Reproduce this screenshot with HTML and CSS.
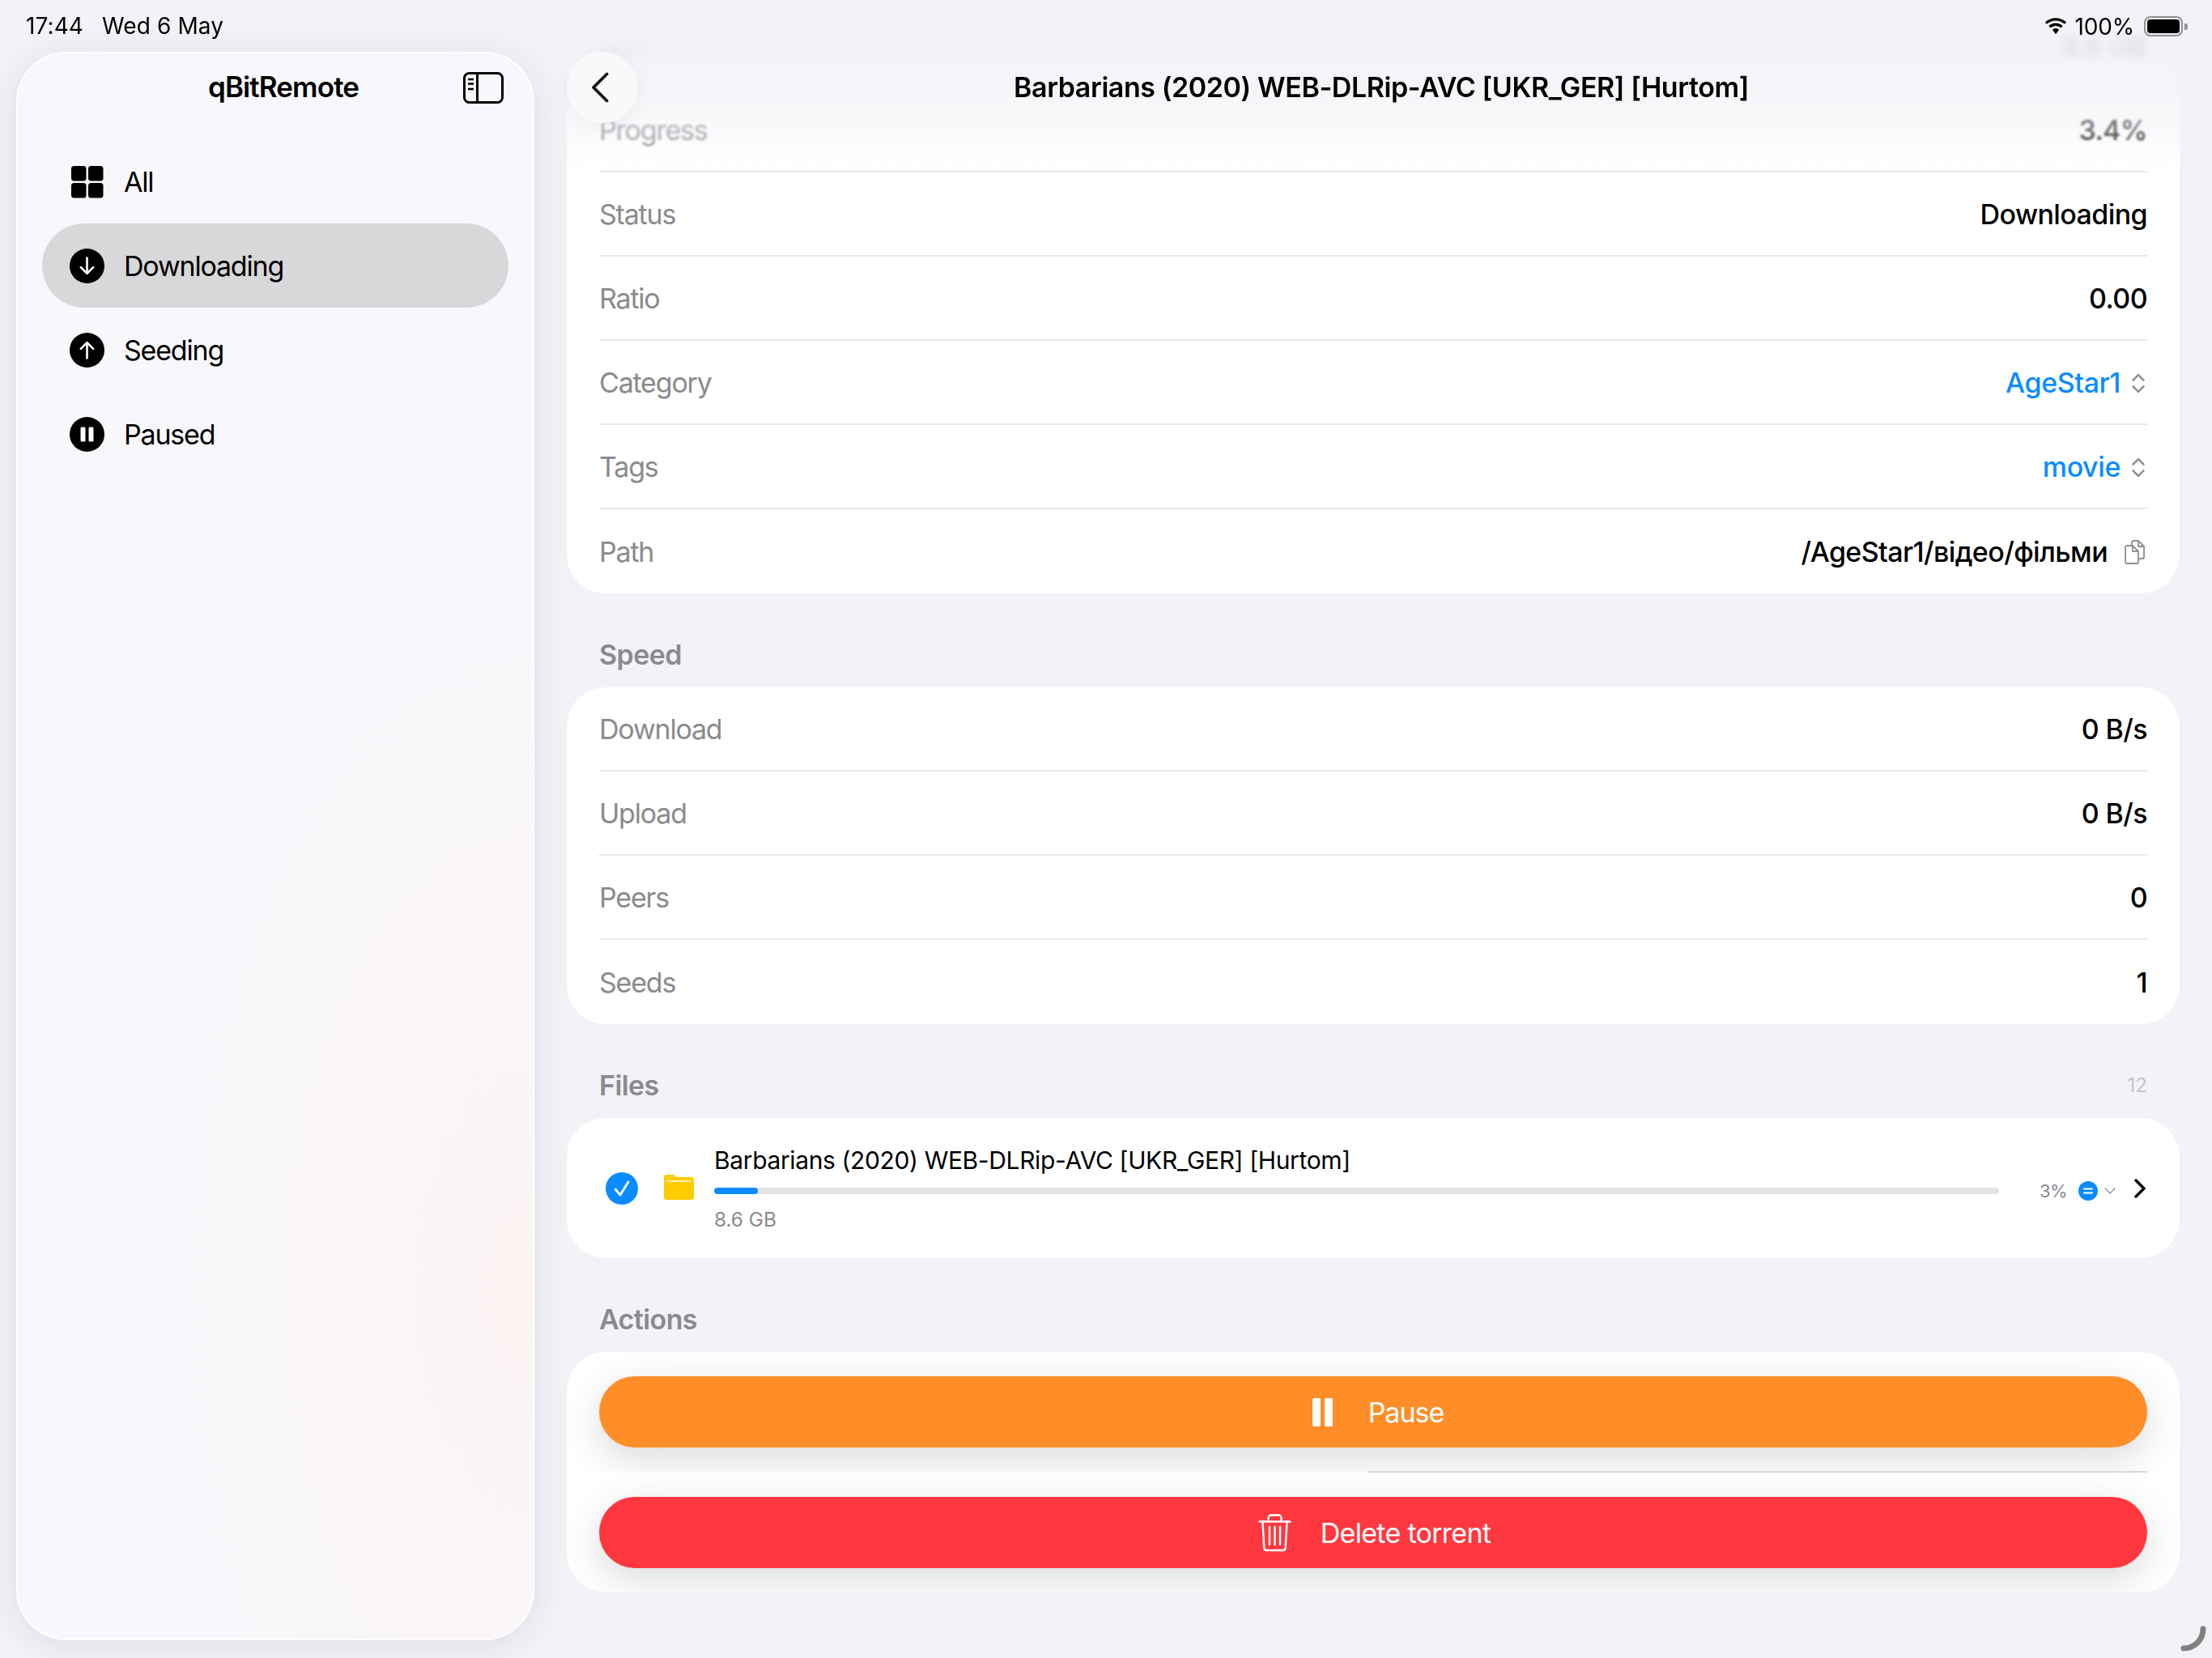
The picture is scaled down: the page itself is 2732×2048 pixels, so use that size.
FILE: index.html
```html
<!DOCTYPE html>
<html lang="en">
<head>
  <meta charset="UTF-8" />
  <title>qBitRemote</title>
  <link rel="stylesheet" href="styles.css">
</head>
<body>
  <!-- Status bar -->
  <div class="statusbar">
    <div class="status-left"><span>17:44</span><span>Wed 6 May</span></div>
    <div class="status-right">
      <svg class="wifi" viewBox="0 0 29 20"><path d="M14.5 3.2c4.1 0 7.8 1.6 10.600 4.200l2.100-2.300C23.900 2 19.400 0 14.500 0S5.100 2 1.800 5.100l2.100 2.300c2.800-2.600 6.500-4.200 10.600-4.200z"/><path d="M14.500 9.400c2.400 0 4.600.9 6.300 2.500l2.100-2.300c-2.200-2.100-5.200-3.400-8.400-3.400s-6.200 1.300-8.400 3.400l2.100 2.300c1.700-1.600 3.900-2.500 6.300-2.500z"/><path d="M14.500 12.500c-1.500 0-2.900.6-3.900 1.500l3.900 5.500 3.900-5.500c-1-.9-2.400-1.500-3.900-1.500z"/></svg>
      <span>100%</span>
      <div class="battery"><div class="battery-body"><div class="battery-level"></div></div><div class="battery-nub"></div></div>
    </div>
  </div>

  <div class="app">
    <!-- Sidebar -->
    <aside class="sidebar">
      <div class="side-head">
        <h1>qBitRemote</h1>
        <svg class="side-toggle" viewBox="0 0 50 39" fill="none" stroke="#000" stroke-width="3">
          <rect x="1.500" y="1.500" width="47" height="36" rx="6"/>
          <path d="M17.500 1.500v36"/>
          <path d="M6 9h7M6 14.500h7M6 21h7" stroke-width="2.500"/>
        </svg>
      </div>
      <nav class="menu">
        <div class="menu-item">
          <svg class="menu-icon" viewBox="0 0 43 43"><rect x="2" y="2" width="18.500" height="18.500" rx="3.500"/><rect x="23" y="2" width="18.500" height="18.500" rx="3.500"/><rect x="2" y="23" width="18.500" height="18.500" rx="3.500"/><rect x="23" y="23" width="18.500" height="18.500" rx="3.500"/></svg>
          <span>All</span>
        </div>
        <div class="menu-item active">
          <svg class="menu-icon" viewBox="0 0 43 43"><circle cx="21.500" cy="21.500" r="21.500"/><path d="M21.500 11.500v19M13.800 23.200l7.700 7.700 7.700-7.700" fill="none" stroke="#fff" stroke-width="2.600" stroke-linecap="round" stroke-linejoin="round"/></svg>
          <span>Downloading</span>
        </div>
        <div class="menu-item">
          <svg class="menu-icon" viewBox="0 0 43 43"><circle cx="21.500" cy="21.500" r="21.500"/><path d="M21.500 31.500v-19M13.800 19.800l7.700-7.700 7.700 7.700" fill="none" stroke="#fff" stroke-width="2.600" stroke-linecap="round" stroke-linejoin="round"/></svg>
          <span>Seeding</span>
        </div>
        <div class="menu-item">
          <svg class="menu-icon" viewBox="0 0 43 43"><circle cx="21.500" cy="21.500" r="21.500"/><rect x="13.500" y="12.500" width="6" height="18" rx="1.500" fill="#fff"/><rect x="23.500" y="12.500" width="6" height="18" rx="1.500" fill="#fff"/></svg>
          <span>Paused</span>
        </div>
      </nav>
    </aside>

    <!-- Detail -->
    <main class="detail">
      <section class="card">
        <div class="row"><span class="label">Size</span><span class="value">8.6 GB</span></div>
        <div class="row"><span class="label">Progress</span><span class="value">3.4%</span></div>
        <div class="row"><span class="label">Status</span><span class="value">Downloading</span></div>
        <div class="row"><span class="label">Ratio</span><span class="value">0.00</span></div>
        <div class="row"><span class="label">Category</span>
          <span class="value link">AgeStar1
            <svg class="updown" viewBox="0 0 16 23" fill="none" stroke="#8e8e93" stroke-width="2.400" stroke-linecap="round" stroke-linejoin="round"><path d="M2 8l6-6 6 6M2 15l6 6 6-6"/></svg>
          </span>
        </div>
        <div class="row"><span class="label">Tags</span>
          <span class="value link">movie
            <svg class="updown" viewBox="0 0 16 23" fill="none" stroke="#8e8e93" stroke-width="2.400" stroke-linecap="round" stroke-linejoin="round"><path d="M2 8l6-6 6 6M2 15l6 6 6-6"/></svg>
          </span>
        </div>
        <div class="row"><span class="label">Path</span>
          <span class="value path">/AgeStar1/відео/фільми
            <svg class="copy" viewBox="0 0 25 30" fill="none" stroke="#8e8e93" stroke-width="1.800" stroke-linejoin="round"><path d="M9 6V3a2 2 0 0 1 2-2h6l7 7v13a2 2 0 0 1-2 2h-4"/><path d="M17 1v7h7"/><path d="M3 7h7l7 7v13a2 2 0 0 1-2 2H3a2 2 0 0 1-2-2V9a2 2 0 0 1 2-2z"/><path d="M10 7v7h7"/></svg>
          </span>
        </div>
      </section>

      <div class="section-title"><span>Speed</span></div>
      <section class="card">
        <div class="row"><span class="label">Download</span><span class="value">0 B/s</span></div>
        <div class="row"><span class="label">Upload</span><span class="value">0 B/s</span></div>
        <div class="row"><span class="label">Peers</span><span class="value">0</span></div>
        <div class="row"><span class="label">Seeds</span><span class="value">1</span></div>
      </section>

      <div class="section-title"><span>Files</span><span class="count">12</span></div>
      <section class="card file-row">
        <svg class="check" viewBox="0 0 40 40"><circle cx="20" cy="20" r="20" fill="#0a8cff"/><path d="M12 21l6 7 10-16" fill="none" stroke="#fff" stroke-width="2.800" stroke-linecap="round" stroke-linejoin="round"/></svg>
        <svg class="folder" viewBox="0 0 37 31"><path d="M3 0h8c2 0 3 1 4 3h19a3 3 0 0 1 3 3v22a3 3 0 0 1-3 3H3a3 3 0 0 1-3-3V3a3 3 0 0 1 3-3z" fill="#ffcc00"/><rect x="3.500" y="7" width="30" height="2" fill="#fff1b0"/></svg>
        <div class="file-main">
          <div class="file-name">Barbarians (2020) WEB-DLRip-AVC [UKR_GER] [Hurtom]</div>
          <div class="bar"><div class="bar-fill"></div></div>
          <div class="file-size">8.6 GB</div>
        </div>
        <div class="file-meta">
          <span class="percent">3%</span>
          <svg class="prio" viewBox="0 0 24 24"><circle cx="12" cy="12" r="12" fill="#0a8cff"/><path d="M7 9.500h10M7 14.500h10" stroke="#fff" stroke-width="2.200" stroke-linecap="round"/></svg>
          <svg class="chev-down" viewBox="0 0 14 8" fill="none" stroke="#8e8e93" stroke-width="1.300" stroke-linecap="round" stroke-linejoin="round"><path d="M1 1l6 6 6-6"/></svg>
        </div>
        <svg class="chev-right" viewBox="0 0 14 24" fill="none" stroke="#000" stroke-width="3.400" stroke-linecap="round" stroke-linejoin="round"><path d="M2 2l10 10L2 22"/></svg>
      </section>

      <div class="section-title"><span>Actions</span></div>
      <section class="card actions">
        <div class="action-row divided">
          <button class="btn btn-pause">
            <svg class="btn-icon-pause" viewBox="0 0 25 35"><rect width="10" height="35" rx="2" fill="#fff"/><rect x="15" width="10" height="35" rx="2" fill="#fff"/></svg>
            <span>Pause</span>
          </button>
        </div>
        <div class="action-row">
          <button class="btn btn-delete">
            <svg class="btn-icon-trash" viewBox="0 0 41 47" fill="none" stroke="#fff" stroke-width="2.400" stroke-linecap="round" stroke-linejoin="round"><path d="M1.500 9.500h38"/><path d="M12.500 9.500V5a3.500 3.500 0 0 1 3.500-3.500h9A3.500 3.500 0 0 1 28.500 5v4.500"/><path d="M5.500 9.500l1.800 32.500a3 3 0 0 0 3 3h20.400a3 3 0 0 0 3-3l1.800-32.500"/><path d="M14 16v22M20.500 16v22M27 16v22"/></svg>
            <span>Delete torrent</span>
          </button>
        </div>
      </section>

      <!-- Nav bar over the scrolled content -->
      <div class="nav-fade"></div>
      <div class="nav">
        <button class="back"><svg viewBox="0 0 22 38" fill="none" stroke="#111" stroke-width="3.800" stroke-linecap="round" stroke-linejoin="round"><path d="M19.500 2.500L3 19l16.500 16.500"/></svg></button>
        <div class="nav-title">Barbarians (2020) WEB-DLRip-AVC [UKR_GER] [Hurtom]</div>
      </div>
    </main>
  </div>

  <svg class="spinner" viewBox="0 0 32 32" fill="none" stroke="#808080" stroke-width="7" stroke-linecap="round"><path d="M28 4c0 13-10 24-24 24"/></svg>
</body>
</html>
```

FILE: styles.css
```css
/* ===== reset & base ===== */
*,*::before,*::after{box-sizing:border-box;margin:0;padding:0;}
html,body{width:2732px;height:2048px;overflow:hidden;}
body{position:relative;font-family:Inter,"Noto Sans",sans-serif;font-size:34px;letter-spacing:-1.2px;background:#f2f2f7;color:#000;}
button{border:none;font:inherit;letter-spacing:inherit;cursor:pointer;}
svg{display:block;flex:none;}

/* ===== status bar ===== */
.statusbar{position:absolute;top:0;left:0;right:0;z-index:5;height:60px;display:flex;justify-content:space-between;align-items:flex-start;padding:20px 30px 0 32px;font-size:28px;line-height:24px;letter-spacing:-.2px;}
.status-left{display:flex;gap:23px;letter-spacing:.1px;}
.status-right{display:flex;align-items:center;gap:9px;}
.wifi{width:30px;height:21px;}
.battery{display:flex;align-items:center;gap:2px;margin-left:3px;}
.battery-body{width:48px;height:25px;border:2px solid #8e8e93;border-radius:8px;padding:2px;}
.battery-level{width:100%;height:100%;background:#000;border-radius:4px;}
.battery-nub{width:4px;height:8px;background:#8e8e93;border-radius:0 3px 3px 0;}

/* ===== layout ===== */
.app{display:flex;gap:40px;padding-left:20px;height:2048px;}

/* ===== sidebar ===== */
.sidebar{flex:0 0 640px;height:1962px;margin-top:64px;border:2px solid #fff;border-radius:62px;box-shadow:0 6px 44px rgba(40,40,60,.1);
  background:radial-gradient(ellipse 480px 900px at 100% 78%,rgba(255,240,236,.6),rgba(255,240,236,0)),#f8f8fc;}
.side-head{position:relative;height:82px;margin-bottom:24px;display:flex;align-items:center;justify-content:center;padding-left:20px;}
.side-head h1{font-size:35px;font-weight:600;letter-spacing:-.9px;}
.side-toggle{position:absolute;right:36px;top:23px;width:50px;height:39px;}
.menu{display:flex;flex-direction:column;padding:0 30px;}
.menu-item{height:104px;display:flex;align-items:center;gap:24px;padding-left:34px;border-radius:52px;}
.menu-item.active{background:#d8d8da;}
.menu-icon{width:43px;height:43px;}

/* ===== detail ===== */
.detail{position:relative;flex:0 0 1992px;padding-top:5px;}
.card{background:#fff;border-radius:48px;}
.row{height:104px;margin:0 40px;padding-top:2px;display:flex;align-items:center;justify-content:space-between;line-height:30px;border-bottom:2px solid #e8e8ea;}
.row:last-child{border-bottom:none;}
.label{color:#8a8a8e;}
.value{font-weight:500;display:flex;align-items:center;letter-spacing:-.6px;}
.link{color:#0a8cff;gap:13px;letter-spacing:-.4px;}
.updown{width:18px;height:25px;margin-right:2px;}
.path{gap:21px;}
.copy{width:25px;height:30px;margin-right:3px;}
.section-title{height:116px;margin:0 40px;padding-bottom:18px;display:flex;align-items:flex-end;justify-content:space-between;font-weight:600;color:#8a8a8e;line-height:44px;letter-spacing:-.6px;}
.count{font-size:24px;font-weight:400;color:#c4c4c8;letter-spacing:0;}

/* ===== file row ===== */
.file-row{height:173px;display:flex;align-items:center;padding:0 42px 0 48px;}
.check{width:40px;height:40px;margin-right:32px;}
.folder{width:37px;height:31px;margin-right:25px;margin-top:-3px;}
.file-main{flex:1;}
.file-name{font-size:30px;line-height:36px;letter-spacing:-.37px;}
.bar{height:8px;margin:16px 0;background:#e3e3e5;border-radius:4px;overflow:hidden;}
.bar-fill{width:3.4%;height:100%;background:#0a8cff;border-radius:4px;}
.file-size{font-size:24.500px;line-height:30px;color:#8a8a8e;letter-spacing:-.1px;}
.file-meta{display:flex;align-items:center;margin:6px 0 0 50px;}
.percent{width:32px;font-size:22px;color:#8a8a8e;margin-right:16px;letter-spacing:-.6px;white-space:nowrap;}
.prio{width:24px;height:24px;margin-right:8px;}
.chev-down{width:14px;height:8px;}
.chev-right{width:14px;height:24px;margin-left:23px;}

/* ===== actions ===== */
.actions{height:297px;overflow:hidden;}
.action-row{position:relative;height:149px;padding:30px 40px 0;overflow:hidden;}
.action-row + .action-row{height:148px;}
.divided::after{content:"";position:absolute;left:990px;right:40px;bottom:0;height:2px;background:#d9d9db;}
.btn{width:100%;height:88px;border-radius:44px;color:#fff;display:flex;align-items:center;justify-content:center;letter-spacing:-1px;box-shadow:0 14px 50px rgba(0,0,0,.15);}
.btn-pause{background:#ff8e28;gap:44px;padding-left:12px;}
.btn-delete{background:#ff383f;gap:36px;padding-left:3px;letter-spacing:-.7px;}
.btn-icon-pause{width:25px;height:35px;}
.btn-icon-trash{width:41px;height:47px;}

/* ===== nav over content ===== */
.nav-fade{position:absolute;top:0;left:0;right:-40px;height:212px;
  background:linear-gradient(#f2f2f7,rgba(242,242,247,.9) 60px,rgba(242,242,247,.77) 108px,rgba(242,242,247,.42) 162px,rgba(242,242,247,.15) 190px,rgba(242,242,247,0));}
.nav-fade::before,.nav-fade::after{content:"";position:absolute;top:0;left:0;right:0;}
.nav-fade::before{height:130px;backdrop-filter:blur(5px);-webkit-mask-image:linear-gradient(#000 75%,transparent);mask-image:linear-gradient(#000 75%,transparent);}
.nav-fade::after{height:200px;backdrop-filter:blur(1.500px);-webkit-mask-image:linear-gradient(#000 85%,transparent);mask-image:linear-gradient(#000 85%,transparent);}
.nav{position:absolute;top:64px;left:0;right:0;height:88px;display:flex;align-items:center;justify-content:center;padding-left:20px;}
.back{position:absolute;left:0;top:0;width:88px;height:88px;border-radius:50%;background:#f9f9fb;box-shadow:0 4px 24px rgba(0,0,0,.05);display:flex;align-items:center;justify-content:center;padding-right:6px;}
.back svg{width:22px;height:38px;}
.nav-title{font-weight:600;font-size:34px;line-height:40px;letter-spacing:-.42px;}

/* ===== activity indicator ===== */
.spinner{position:absolute;left:2693px;top:2008px;width:32px;height:32px;}
```
